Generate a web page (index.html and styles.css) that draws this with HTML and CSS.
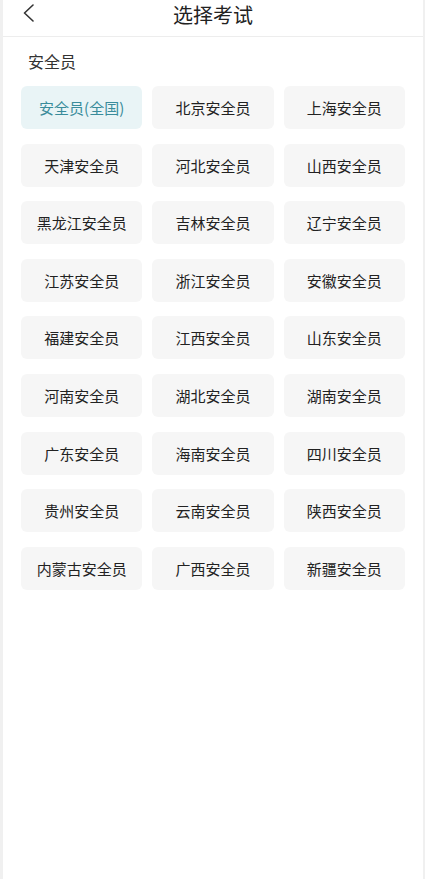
FILE: index.html
```html
<!DOCTYPE html>
<html lang="zh-CN">
<head>
    <meta charset="UTF-8">
    <meta name="viewport" content="width=device-width, initial-scale=1.0">
    <title>选择考试</title>
    <link rel="stylesheet" href="styles.css">
</head>
<body>
    <div class="page">
        <header class="top-bar">
            <a class="back" href="#">
                <svg width="13" height="18" viewBox="0 0 13 18"><path d="M11 1 L2.5 9 L11 17" fill="none" stroke="#333" stroke-width="1.6" stroke-linecap="round" stroke-linejoin="round"/></svg>
            </a>
            <h1>选择考试</h1>
        </header>
        <section class="exam-section">
            <h2>安全员</h2>
            <div class="exam-grid">
                <a class="exam-item active" href="#">安全员(全国)</a>
                <a class="exam-item" href="#">北京安全员</a>
                <a class="exam-item" href="#">上海安全员</a>
                <a class="exam-item" href="#">天津安全员</a>
                <a class="exam-item" href="#">河北安全员</a>
                <a class="exam-item" href="#">山西安全员</a>
                <a class="exam-item" href="#">黑龙江安全员</a>
                <a class="exam-item" href="#">吉林安全员</a>
                <a class="exam-item" href="#">辽宁安全员</a>
                <a class="exam-item" href="#">江苏安全员</a>
                <a class="exam-item" href="#">浙江安全员</a>
                <a class="exam-item" href="#">安徽安全员</a>
                <a class="exam-item" href="#">福建安全员</a>
                <a class="exam-item" href="#">江西安全员</a>
                <a class="exam-item" href="#">山东安全员</a>
                <a class="exam-item" href="#">河南安全员</a>
                <a class="exam-item" href="#">湖北安全员</a>
                <a class="exam-item" href="#">湖南安全员</a>
                <a class="exam-item" href="#">广东安全员</a>
                <a class="exam-item" href="#">海南安全员</a>
                <a class="exam-item" href="#">四川安全员</a>
                <a class="exam-item" href="#">贵州安全员</a>
                <a class="exam-item" href="#">云南安全员</a>
                <a class="exam-item" href="#">陕西安全员</a>
                <a class="exam-item" href="#">内蒙古安全员</a>
                <a class="exam-item" href="#">广西安全员</a>
                <a class="exam-item" href="#">新疆安全员</a>
            </div>
        </section>
    </div>
</body>
</html>
```

FILE: styles.css
```css
body {
    margin: 0;
    padding: 0;
    background-color: #f0f0f0;
    font-family: "Noto Sans CJK SC", "Noto Sans", sans-serif;
    color: #333;
}

.page {
    margin: 0 2px 0 3px;
    min-height: 879px;
    background-color: #fff;
}

.top-bar {
    position: relative;
    height: 26px;
    padding: 2px 0 8px;
    border-bottom: 1px solid #ededed;
    display: flex;
    align-items: center;
    justify-content: center;
}

.top-bar h1 {
    margin: 0;
    font-size: 20px;
    font-weight: 400;
    line-height: 26px;
    color: #222;
}

.back {
    position: absolute;
    left: 19px;
    top: 4px;
    display: flex;
}

.exam-section {
    padding: 13px 18px 0;
}

.exam-section h2 {
    margin: 0 0 14px 7px;
    font-size: 16px;
    font-weight: 400;
    line-height: 22px;
    color: #333;
}

.exam-grid {
    display: grid;
    grid-template-columns: repeat(3, 1fr);
    column-gap: 10px;
    row-gap: 14.6px;
}

.exam-item {
    height: 43px;
    display: flex;
    align-items: center;
    justify-content: center;
    background-color: #f6f6f6;
    border-radius: 6px;
    font-size: 15px;
    color: #222;
    text-decoration: none;
}

.exam-item.active {
    background-color: #e9f4f6;
    color: #3a8c9b;
}
```
